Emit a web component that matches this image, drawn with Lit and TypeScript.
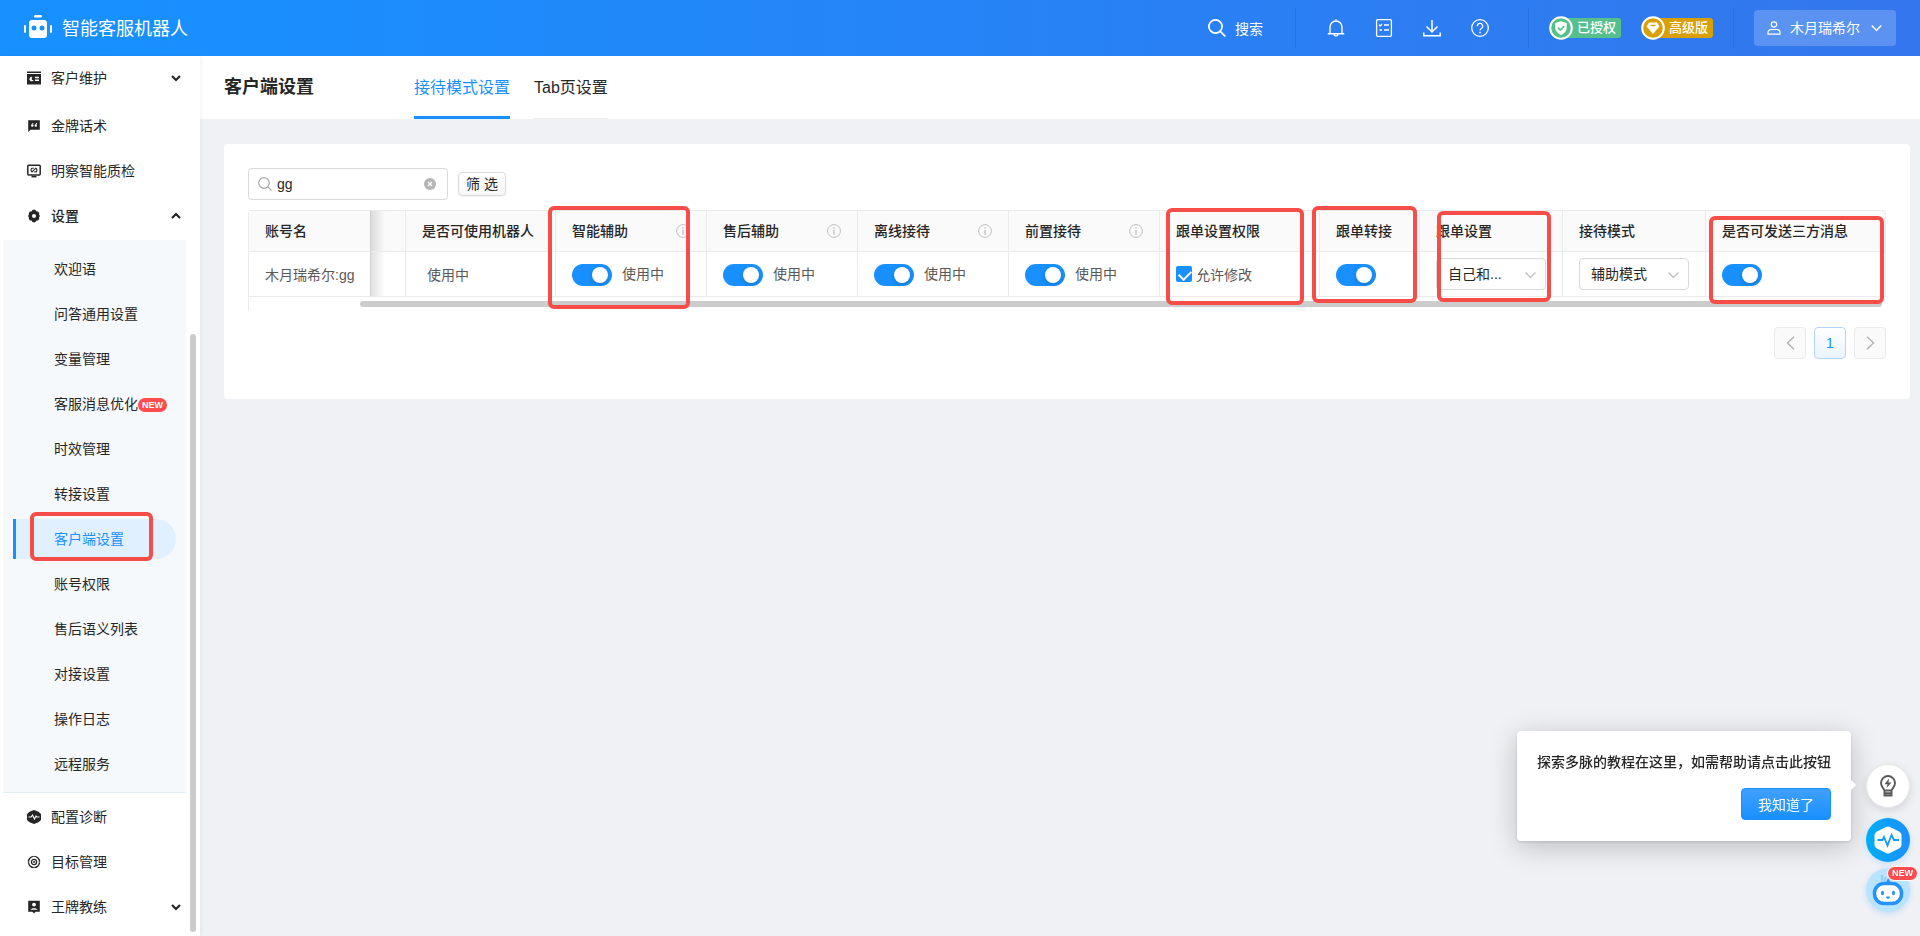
import { LitElement, html, svg, css, nothing, TemplateResult } from "lit";
import { customElement, state } from "lit/decorators.js";
import { classMap } from "lit/directives/class-map.js";

const arrow = (up: boolean) => html`<svg class="chev" viewBox="0 0 10 8" aria-hidden="true">
  <path d=${up ? "M1 6 5 2 9 6" : "M1 2 5 6 9 2"} fill="none" stroke="currentColor" stroke-width="2.2" /></svg>`;

const icons: Record<string, TemplateResult> = {
  customer: svg`<path d="M0 .5h14V2H0z" fill="currentColor"/><path d="M0 3h14v10.500H0z" fill="currentColor"/>
    <path d="M5.800 6.200A2.200 2.200 0 1 0 6.600 9H4.800V6.200z" fill="#fff"/><path d="M8 6.500h4M8 9.300h4" stroke="#fff" stroke-width="1.400"/>`,
  quote: svg`<path d="M1.200 1.300h11.600v9.400H3.600L1.200 13z" fill="currentColor"/>
    <path d="M6.400 4 5.200 5.400M10 4 8.800 5.400" stroke="#fff" stroke-width="1"/><circle cx="5.300" cy="6.500" r="1.200" fill="#fff"/><circle cx="8.800" cy="6.500" r="1.200" fill="#fff"/>`,
  monitor: svg`<rect x=".8" y="1.300" width="12.400" height="9.600" rx=".8" fill="none" stroke="currentColor" stroke-width="1.500"/>
    <path d="M4.500 12.600h5" stroke="currentColor" stroke-width="1.600"/>
    <path d="M6.800 4.300 5 4.200Q3 6 5 7.900L8.800 4.200Q11 6 9 8L7.200 7.900" fill="none" stroke="currentColor" stroke-width="1.100"/>`,
  gear: svg`<path d="M5.200 1.200 7 .6l1.800.6.700 1.200 1.500.1 1.200 1.500-.1 1.500.8 1.500-.8 1.500.1 1.500L11 11.500l-1.500.1-.7 1.200-1.800.6-1.800-.6-.7-1.200-1.500-.1L1.800 10l.1-1.500L1.100 7l.8-1.500L1.800 4 3 2.500l1.500-.1z" fill="currentColor"/><circle cx="7" cy="7" r="2" fill="#fff"/>`,
  diagnose: svg`<path d="M7 0 11.500 1.800 14 4v6l-2.500 2.200L7 14l-4.500-1.800L0 10V4l2.500-2.200z" fill="currentColor"/>
    <path d="M1.500 7h2.700L5.500 5 7.500 9 9 6l.8 1h2.700" fill="none" stroke="#fff" stroke-width="1.100"/>`,
  target: svg`<circle cx="7" cy="7" r="5.600" fill="none" stroke="currentColor" stroke-width="1.400"/><circle cx="7" cy="7" r="2.600" fill="none" stroke="currentColor" stroke-width="1.300"/><circle cx="7" cy="7" r="1" fill="currentColor"/>
    <path d="M7 0v1.500M7 12.500V14M0 7h1.500M12.500 7H14" stroke="#fff" stroke-width="1"/>`,
  coach: svg`<path d="M1.200.8h11.600v11H8.500L7 13.500 5.500 11.800H1.200z" fill="currentColor"/><circle cx="7" cy="4.600" r="1.900" fill="#fff"/><path d="M3.500 9.800c.3-2.200 6.700-2.200 7 0z" fill="#fff"/>`,
};

interface Item { label: string; icon: string; open?: boolean; bold?: boolean }
const topItems: Item[] = [
  { label: "客户维护", icon: "customer", open: false },
  { label: "金牌话术", icon: "quote" },
  { label: "明察智能质检", icon: "monitor" },
  { label: "设置", icon: "gear", open: true, bold: true },
];
const bottomItems: Item[] = [
  { label: "配置诊断", icon: "diagnose" },
  { label: "目标管理", icon: "target" },
  { label: "王牌教练", icon: "coach", open: false },
];
const subItems = ["欢迎语", "问答通用设置", "变量管理", "客服消息优化", "时效管理", "转接设置", "客户端设置",
  "账号权限", "售后语义列表", "对接设置", "操作日志", "远程服务"];

@customElement("side-menu")
class SideMenu extends LitElement {
  @state() active = "客户端设置";
  static styles = css`
    :host { display: block; position: relative; z-index: 1; width: 200px; flex: none; background: #fff; overflow: hidden; box-shadow: 1px 0 4px rgba(0, 21, 41, .06); }
    nav { display: flex; flex-direction: column; gap: 5px; padding-top: 2px; }
    a { color: #262626; text-decoration: none; display: flex; align-items: center; height: 40px; font-size: 14px; }
    .label { padding-bottom: 2px; }
    .item { padding: 0 19px 0 27px; }
    .item:first-child { margin-bottom: 3px; }
    .item.bold { font-weight: 500; }
    .ico { width: 14px; height: 14px; margin-right: 10px; }
    .chev { width: 10px; height: 8px; margin-left: auto; }
    .sub { display: flex; flex-direction: column; gap: 5px; margin: -1px 14px -1px 3px; padding: 9px 10px 8px; background: #f5f9fc; border-bottom: 1px solid #e3edf8; }
    .sub a { position: relative; padding-left: 38px; border-left: 3px solid transparent; border-radius: 0 20px 20px 0; }
    .sub a.on { color: #1890ff; background: #e1f0ff; border-left-color: #1890ff; }
    .new { margin-top: 2px; padding: 0 4px; border-radius: 7px; background: #ff4d4f; color: #fff; font-size: 9px; font-weight: 700; line-height: 14px; }
    .mark { position: absolute; left: 14px; top: -7px; width: 115px; height: 41px; border: 4px solid #f74d48; border-radius: 6px; pointer-events: none; }
    .thumb { position: absolute; right: 4px; top: 278px; bottom: 4px; width: 6px; border-radius: 3px; background: #ccc; }
  `;
  item(i: Item) {
    return html`<a href="#" class=${classMap({ item: true, bold: !!i.bold })}>
      <svg class="ico" viewBox="0 0 14 14" aria-hidden="true">${icons[i.icon]}</svg><span class="label">${i.label}</span>
      ${i.open === undefined ? nothing : arrow(i.open)}</a>`;
  }
  render() {
    return html`<nav>
      ${topItems.map((i) => this.item(i))}
      <div class="sub">${subItems.map((s) => html`<a href="#" class=${classMap({ on: s === this.active })}
        @click=${() => (this.active = s)}><span class="label">${s}</span>${s === "客服消息优化" ? html`<span class="new">NEW</span>` : nothing}
        ${s === "客户端设置" ? html`<span class="mark"></span>` : nothing}</a>`)}</div>
      ${bottomItems.map((i) => this.item(i))}
    </nav><div class="thumb"></div>`;
  }
}

@customElement("top-bar")
class TopBar extends LitElement {
  static styles = css`
    :host { display: flex; align-items: center; height: 56px; padding: 0 24px; color: #fff; background: linear-gradient(90deg, #1890ff 5%, #3476ed); font-size: 14px; box-sizing: border-box; }
    svg { display: block; fill: none; stroke: currentColor; }
    .logo { width: 28px; height: 24px; margin: 0 10px 2px 0; }
    .name { font-size: 18px; margin-right: auto; padding-bottom: 2px; }
    button { font: inherit; color: inherit; border: 0; background: none; padding: 0; display: flex; align-items: center; justify-content: center; }
    .search { gap: 9px; margin-right: 32px; }
    .i18 { width: 18px; height: 18px; }
    .tool { width: 48px; height: 40px; }
    hr { width: 1px; height: 40px; margin: 0; border: 0; background: rgba(20, 80, 190, .25); }
    .tools { display: flex; margin: 0 24px 0 16px; }
    .badges { display: flex; gap: 20px; margin: 0 20px; }
    .badge { display: flex; align-items: center; height: 24px; font-size: 13px; font-weight: 500; }
    .badge svg { width: 24px; height: 24px; position: relative; }
    .badge b { font-weight: 500; height: 20px; line-height: 20px; margin-left: -12px; padding: 0 5px 0 16px; border-radius: 3px; background: var(--c); }
    .green { --c: #56c08d; }
    .gold { --c: #d9a005; }
    .user { height: 36px; margin-left: 20px; padding: 0 14px 0 13px; border-radius: 4px; background: rgba(255, 255, 255, .2); }
    .user .p { width: 14px; height: 14px; margin-right: 9px; }
    .user .d { width: 11px; height: 8px; margin-left: 11px; }
    .label { padding-bottom: 2px; }
  `;
  render() {
    return html`
      <svg class="logo" viewBox="0 0 28 24" aria-hidden="true"><g fill="#fff" stroke="none"><rect x="10" y="0" width="8" height="2.500" rx="1.200"/><rect x="5" y="5" width="18" height="18" rx="3"/><rect x="0" y="10" width="2" height="8" rx="1"/><rect x="26" y="10" width="2" height="8" rx="1"/></g><g fill="#1890ff" stroke="none"><circle cx="10" cy="13" r="2.500"/><circle cx="18" cy="13" r="2.500"/></g></svg>
      <span class="name">智能客服机器人</span>
      <button class="search"><svg class="i18" viewBox="0 0 18 18" stroke-width="1.700"><circle cx="7.500" cy="7.500" r="6.600"/><path d="m12.300 12.300 5 5"/></svg>搜索</button>
      <hr />
      <div class="tools">
        <button class="tool" aria-label="通知"><svg class="i18" viewBox="0 0 18 18" stroke-width="1.400"><path d="M3 14.500V8a6 6 0 0 1 12 0v6.500M.8 14.800h16.400M9 .3V2M7 15.500c.3 2 3.700 2 4 0"/></svg></button>
        <button class="tool" aria-label="任务"><svg class="i18" viewBox="0 0 18 18" stroke-width="1.300"><rect x="1.600" y=".7" width="14.800" height="16.600" rx="1"/><path d="m4 5.800 1.200 1.200L7 5M9 6h5M9 11h5M4.500 11h2.500"/></svg></button>
        <button class="tool" aria-label="下载"><svg class="i18" viewBox="0 0 18 18" stroke-width="1.500"><path d="M9 1v12M3.500 7.500 9 13l5.500-5.500M.8 13.500v3.200h16.400v-3.200"/></svg></button>
        <button class="tool" aria-label="帮助"><svg class="i18" viewBox="0 0 18 18" stroke-width="1.300"><circle cx="9" cy="9" r="8.300"/><path d="M6.300 7.200a2.700 2.700 0 1 1 4 2.300Q9 10.300 9 11.500M9 12.800v1.600"/></svg></button>
      </div>
      <hr />
      <div class="badges">
        <span class="badge green"><svg viewBox="0 0 24 24"><circle cx="12" cy="12" r="10.800" fill="#56c08d" stroke="#fff" stroke-width="2"/><path d="m12 5.300 5.700 1.800v5q0 4-5.700 6.900-5.700-2.900-5.700-6.900v-5z" fill="#fff" stroke="none"/><path d="m9 11.700 2.300 2.300 4-4" stroke="#56c08d" stroke-width="1.700"/></svg><b>已授权</b></span>
        <span class="badge gold"><svg viewBox="0 0 24 24"><circle cx="12" cy="12" r="10.800" fill="#d9a005" stroke="#fff" stroke-width="2"/><path d="M8 6.500h8l2.500 4L12 18l-6.500-7.500z" fill="#fff" stroke="none"/><path d="M9.500 9.500h5" stroke="#d9a005" stroke-width="1.300"/></svg><b>高级版</b></span>
      </div>
      <hr />
      <button class="user"><svg class="p" viewBox="0 0 14 14" stroke-width="1.200"><circle cx="7" cy="3.500" r="2.700"/><path d="M1 13.200v-1.400Q1 8.500 4.500 8.500h5Q13 8.500 13 11.800v1.400z"/></svg><span class="label">木月瑞希尔</span><svg class="d" viewBox="0 0 11 8" stroke-width="1.500"><path d="m.8 1.500 4.700 5 4.700-5"/></svg></button>`;
  }
}

interface Col { w: number; title: string; info?: boolean; kind?: string; mark?: [number, number, number, number] }
/* mark: left and top from the header cell, then width and height */
const cols: Col[] = [
  { w: 122, title: "账号名", kind: "name" },
  { w: 35, title: "", kind: "empty" },
  { w: 150, title: "是否可使用机器人", kind: "text" },
  { w: 151, title: "智能辅助", info: true, kind: "switch", mark: [-8, -5, 142, 103] },
  { w: 151, title: "售后辅助", info: true, kind: "switch" },
  { w: 151, title: "离线接待", info: true, kind: "switch" },
  { w: 151, title: "前置接待", info: true, kind: "switch" },
  { w: 160, title: "跟单设置权限", kind: "check", mark: [6, -3, 138, 97] },
  { w: 100, title: "跟单转接", kind: "plain", mark: [-8, -5, 105, 97] },
  { w: 143, title: "跟单设置", kind: "自己和...", mark: [17, 0, 114, 91] },
  { w: 143, title: "接待模式", kind: "辅助模式" },
  { w: 180, title: "是否可发送三方消息", kind: "plain", mark: [3, 5, 175, 88] },
];

@customElement("client-settings")
class ClientSettings extends LitElement {
  @state() query = "gg";
  static styles = css`
    :host { display: block; flex: 1; min-width: 0; font-size: 14px; color: #262626; }
    svg { fill: none; stroke: currentColor; }
    * { box-sizing: border-box; }
    button, input, select { font: inherit; color: inherit; }
    header { display: flex; height: 63px; padding-left: 24px; background: #fff; }
    h1 { margin: 0 100px 0 0; font-size: 18px; font-weight: 600; line-height: 63px; }
    .tabs { display: flex; gap: 24px; }
    .tabs a { font-size: 16px; line-height: 64px; height: 63px; color: #262626; text-decoration: none; border-bottom: 1px solid #eee; }
    .tabs a.on { color: #1890ff; border-bottom: 3px solid #1890ff; }
    .card { margin: 25px 10px 0 24px; padding: 24px 24px 40px; background: #fff; border-radius: 4px; }
    .bar { display: flex; align-items: center; gap: 10px; margin-bottom: 10px; }
    .find { display: flex; align-items: center; width: 200px; height: 32px; padding: 0 11px 0 9px; border: 1px solid #d9d9d9; border-radius: 4px; }
    .find svg { width: 14px; height: 14px; color: #aaa; }
    .find input { flex: 1; min-width: 0; padding: 0 0 0 5px; border: 0; outline: 0; background: none; }
    .clear { display: flex; padding: 0; border: 0; background: none; }
    .find .clear svg { width: 12px; height: 12px; }
    .filter { width: 48px; height: 24px; padding: 0; line-height: 20px; border: 1px solid #d9d9d9; border-radius: 4px; background: linear-gradient(#fff, #f7f7f7); box-shadow: 0 1px 2px rgba(0, 0, 0, .05); }
    .wrap { position: relative; padding-bottom: 14px; border-left: 1px solid #ebebeb; border-top-left-radius: 4px; }
    table { width: 100%; table-layout: fixed; border-collapse: separate; border-spacing: 0; }
    th, td { position: relative; padding: 0 16px; text-align: left; white-space: nowrap; border-right: 1px solid #ebebeb; border-bottom: 1px solid #ebebeb; }
    th { height: 42px; font-weight: 500; background: #fafafa; border-top: 1px solid #ebebeb; }
    th:last-child { border-top-right-radius: 4px; }
    td { height: 45px; color: #595959; }
    .fixed { z-index: 2; border-right-color: #d2d2d2; }
    .fixed::after { content: ""; position: absolute; left: 100%; top: 0; bottom: 0; width: 14px; margin-left: 1px; background: linear-gradient(90deg, rgba(0, 0, 0, .12), rgba(0, 0, 0, 0)); }
    .head, .cell { display: flex; align-items: center; }
    .head span { padding-bottom: 2px; }
    .head svg { width: 14px; height: 14px; margin-left: auto; color: #bfbfbf; }
    .state { padding-left: 5px; }
    .cell span { margin-left: 10px; padding-bottom: 3px; }
    .switch { appearance: none; flex: none; display: block; width: 40px; height: 22px; margin: 1px 0 0; padding: 3px; border-radius: 11px; background: #bfbfbf; }
    .switch::before { content: ""; display: block; width: 16px; height: 16px; border-radius: 8px; background: #fff; box-shadow: 0 2px 4px rgba(0, 35, 11, .2); }
    .switch:checked { background: #1890ff; }
    .switch:checked::before { margin-left: 17px; }
    .check { display: flex; align-items: center; gap: 4px; }
    .check input { appearance: none; width: 16px; height: 16px; margin: 0; border-radius: 2px; border: 1px solid #d9d9d9; }
    .check input:checked { border: 0; background: #1890ff; }
    .check input:checked::before { content: ""; display: block; width: 6px; height: 10px; margin: 2px 0 0 5px; border: solid #fff; border-width: 0 2px 2px 0; transform: rotate(45deg); }
    .select { position: relative; display: block; width: 110px; color: #262626; }
    .select select { appearance: none; width: 100%; height: 32px; padding: 0 24px 0 11px; border: 1px solid #d9d9d9; border-radius: 4px; background: #fff; display: block; }
    .select svg { position: absolute; right: 10px; top: 13px; width: 11px; height: 8px; color: #bfbfbf; pointer-events: none; }
    .mark { position: absolute; z-index: 3; border: 4px solid #f74d48; border-radius: 6px; pointer-events: none; }
    .marked { z-index: 3; }
    .thumb { position: absolute; left: 111px; right: 4px; bottom: 4px; height: 6px; border-radius: 3px; background: #ccc; }
    .pages { display: flex; justify-content: flex-end; gap: 8px; margin-top: 16px; }
    .pages button { display: flex; align-items: center; justify-content: center; width: 32px; height: 32px; padding: 0; border: 1px solid #ebebeb; border-radius: 4px; background: #fafafa; color: #b0b0b0; }
    .pages .on { color: #1890ff; border-color: #b5d3fa; background: linear-gradient(#fff, #e9f4ff); }
    .pages svg { width: 9px; height: 14px; }
  `;
  toggle(name: string) {
    return html`<input class="switch" type="checkbox" role="switch" aria-label=${name} checked />`;
  }
  cell(c: Col) {
    switch (c.kind) {
      case "name": return html`<td class="fixed">木月瑞希尔:gg</td>`;
      case "empty": return html`<td></td>`;
      case "text": return html`<td><span class="state">使用中</span></td>`;
      case "switch": return html`<td><label class="cell">${this.toggle(c.title)}<span>使用中</span></label></td>`;
      case "plain": return html`<td>${this.toggle(c.title)}</td>`;
      case "check": return html`<td><label class="check"><input type="checkbox" checked />允许修改</label></td>`;
      default: return html`<td><label class="select"><select aria-label=${c.title}><option>${c.kind}</option></select>
        <svg viewBox="0 0 11 8" stroke-width="1.300"><path d="m.5 1.500 5 5 5-5"/></svg></label></td>`;
    }
  }
  box(m: [number, number, number, number]) {
    return html`<i class="mark" style="left:${m[0]}px;top:${m[1]}px;width:${m[2]}px;height:${m[3]}px"></i>`;
  }
  render() {
    return html`
      <header><h1>客户端设置</h1><nav class="tabs"><a class="on" href="#">接待模式设置</a><a href="#">Tab页设置</a></nav></header>
      <section class="card">
        <div class="bar">
          <label class="find"><svg viewBox="0 0 14 14" stroke-width="1.200"><circle cx="6" cy="6" r="5.300"/><path d="m9.800 9.800 3.800 3.800"/></svg>
            <input type="text" aria-label="搜索账号" .value=${this.query} @input=${(e: any) => (this.query = e.target.value)} />
            <button class="clear" aria-label="清除" @click=${() => (this.query = "")}><svg viewBox="0 0 12 12"><circle cx="6" cy="6" r="6" fill="#b5b5b5" stroke="none"/><path d="m4 4 4 4m0-4L4 8" stroke="#fff" stroke-width="1.200"/></svg></button></label>
          <button class="filter">筛 选</button>
        </div>
        <div class="wrap">
          <table>
            <colgroup>${cols.map((c) => html`<col style="width:${c.w}px" />`)}</colgroup>
            <thead><tr>${cols.map((c, i) => html`<th class=${classMap({ fixed: i === 0, marked: !!c.mark })}><div class="head"><span>${c.title}</span>${c.info
              ? html`<svg viewBox="0 0 14 14"><circle cx="7" cy="7" r="6.400"/><path d="M7 3.200v1.500M7 6v4.800" stroke-width="1.400"/></svg>` : nothing}</div>${c.mark ? this.box(c.mark) : nothing}</th>`)}</tr></thead>
            <tbody><tr>${cols.map((c) => this.cell(c))}</tr></tbody>
          </table>
          <div class="thumb"></div>
        </div>
        <div class="pages">
          <button disabled aria-label="上一页"><svg viewBox="0 0 9 14" stroke-width="1.400"><path d="M8 .8 1.500 7 8 13.200"/></svg></button>
          <button class="on">1</button>
          <button disabled aria-label="下一页"><svg viewBox="0 0 9 14" stroke-width="1.400"><path d="M1 .8 7.500 7 1 13.200"/></svg></button>
        </div>
      </section>`;
  }
}

@customElement("help-dock")
class HelpDock extends LitElement {
  static styles = css`
    :host { position: fixed; right: 10px; bottom: 24px; z-index: 5; font-size: 14px; color: #262626; }
    button { font: inherit; padding: 0; cursor: pointer; }
    .dock { display: flex; flex-direction: column; align-items: center; }
    .round { display: flex; width: 44px; height: 44px; border: 0; border-radius: 22px; align-items: center; justify-content: center; background: none; position: relative; }
    .tip { background: #fff; margin-bottom: 10px; border: 1px solid #e6e6e6; box-shadow: 0 3px 10px rgba(0, 0, 0, .12); }
    .pulse { background: linear-gradient(90deg, #00aef5, #1e8fff); box-shadow: 0 2px 6px rgba(24, 144, 255, .2); margin-bottom: 6px; }
    .bot { background: #b9e4ff; box-shadow: 0 2px 6px rgba(24, 144, 255, .2); }
    .new { position: absolute; left: 21px; top: -2px; padding: 0 4px; border: 1px solid #fff; border-radius: 8px; background: #ff4d4f; color: #fff; font-size: 9px; font-weight: 700; line-height: 13px; }
    .pop { position: absolute; right: 59px; bottom: 71px; box-sizing: border-box; padding: 20px 20px 21px; display: flex; flex-direction: column; align-items: flex-end; gap: 15px; white-space: nowrap; background: #fff; border-radius: 4px; font-weight: 500; box-shadow: 0 6px 28px rgba(0, 0, 0, .22), 0 1px 3px rgba(0, 0, 0, .12); }
    .pop::after { content: ""; position: absolute; right: -5px; top: 49px; border: solid transparent; border-width: 5px 0 5px 5px; border-left-color: #fff; }
    .pop p { margin: 0; line-height: 22px; }
    .ok { width: 90px; height: 32px; border: 1px solid #1890ff; border-radius: 4px; color: #fff; background: linear-gradient(#40a0ff, #1890ff); font-weight: 400; }
  `;
  render() {
    return html`
      <div class="pop" role="dialog"><p>探索多脉的教程在这里，如需帮助请点击此按钮</p><button class="ok">我知道了</button></div>
      <div class="dock">
        <button class="round tip" aria-label="教程"><svg width="16" height="22" viewBox="0 0 16 22" fill="none" stroke="#595959" stroke-width="1.900"><path d="M4.500 15.500C4 13.500 1 12 1 8a7 7 0 0 1 14 0c0 4-3 5.500-3.500 7.500zM4.500 16v4.500h7V16M4.500 18.300h7"/><path d="M9 3.500 4.500 9.200h3L6.500 13l5-5.500h-3z" fill="#595959" stroke="none"/></svg></button>
        <button class="round pulse" aria-label="诊断"><svg width="28" height="28" viewBox="0 0 28 28"><path d="M14 .5q1 0 2 .6l9.500 4.700Q27.500 7 27.500 9v10q0 2-2 3.200L16 26.900q-2 1.200-4 0l-9.500-4.700Q.5 21 .5 19V9q0-2 2-3.200L12 1.100q1-.6 2-.6z" fill="#fff"/><path d="M3.500 14h5l1.500-3 3.500 8.500 4-10.500 2.500 5h5" fill="none" stroke="#179bfa" stroke-width="1.800"/></svg></button>
        <button class="round bot" aria-label="智能助手"><svg width="32" height="32" viewBox="0 0 32 32"><path d="M8.500 10.500 14 8.500 16 4l3 5z" fill="#2a93f5"/><path d="M10 1v6M13 3v4" stroke="#77bdf8" stroke-width="1.200"/><rect x="2.500" y="9.500" width="27" height="20" rx="9.500" fill="#fff" stroke="#2492ff" stroke-width="3.500"/><ellipse cx="10.500" cy="19" rx="1.500" ry="2.300" fill="#2492ff"/><ellipse cx="21.500" cy="19" rx="1.500" ry="2.300" fill="#2492ff"/><path d="M14.300 23h3.400L16 24.800z" fill="#2492ff" stroke="#2492ff"/></svg><span class="new">NEW</span></button>
      </div>`;
  }
}

@customElement("app-root")
class AppRoot extends LitElement {
  static styles = css`
    :host { display: flex; flex-direction: column; height: 100vh; overflow: hidden; background: #f0f1f5; font-family: "Liberation Sans", "Noto Sans CJK SC", sans-serif; font-size: 14px; }
    top-bar { flex: none; }
    .body { display: flex; flex: 1; min-height: 0; }
  `;
  render() {
    return html`<top-bar></top-bar><div class="body"><side-menu></side-menu><client-settings></client-settings></div><help-dock></help-dock>`;
  }
}
